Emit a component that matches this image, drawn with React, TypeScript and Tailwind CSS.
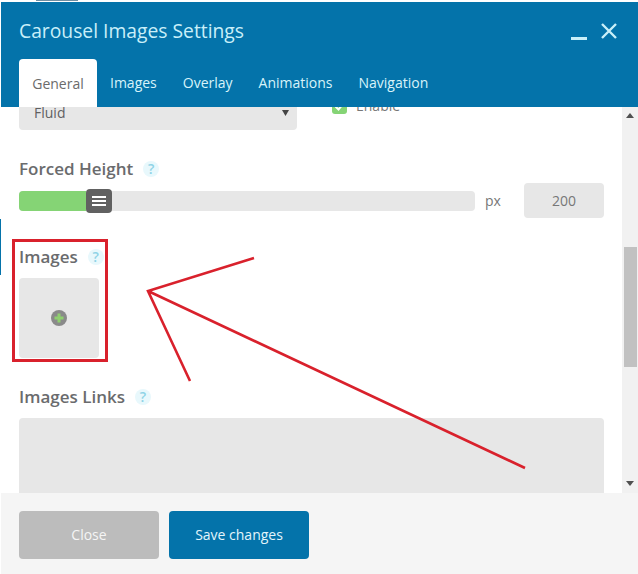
import { FC } from "react";

const font = { fontFamily: '"Open Sans", sans-serif' };

const Help: FC<{ className?: string }> = ({ className = "" }) => (
  <span
    className={`flex h-[16px] w-[16px] items-center justify-center rounded-full bg-[#e8f8fc] text-[14px] font-semibold text-[#8fd3e6] ${className}`}
  >
    ?
  </span>
);

const Label: FC<{ text: string; className?: string }> = ({ text, className = "" }) => (
  <div className={`flex h-[22px] items-center text-[17px] font-semibold leading-[22px] text-[#6a6b6d] ${className}`}>
    {text}
    <Help className="ml-[10px]" />
  </div>
);

const Scrollbar: FC = () => (
  <div className="flex w-[16px] shrink-0 flex-col items-center bg-[#f1f1f1]">
    <svg width="8" height="5" viewBox="0 0 8 5" className="mt-[6px] shrink-0">
      <path d="M4 0 8 5H0z" fill="#505050" />
    </svg>
    <div className="mt-[129px] h-[120px] w-[13px] shrink-0 bg-[#c1c1c1]" />
    <svg width="8" height="5" viewBox="0 0 8 5" className="mt-[114px] shrink-0">
      <path d="M0 0H8L4 5z" fill="#505050" />
    </svg>
  </div>
);

const App: FC = () => {
  return (
    <div className="relative h-[574px] w-[638px] overflow-hidden bg-white" style={font}>
      {/* Page behind the modal */}
      <div className="h-[2px] bg-white">
        <div className="ml-[36px] h-px w-[42px] bg-[#6f8ea3]" />
      </div>

      <div className="flex h-[572px] flex-col pl-px">
        {/* Header */}
        <div className="h-[105px] shrink-0 bg-[#0473aa] pl-[18px] pr-[21px]">
          <div className="flex h-[57px] items-center justify-between">
            <h4 className="text-[19.3px] leading-[28px] text-[#c9eff9]">Carousel Images Settings</h4>
            <div className="flex items-center gap-[14px]">
              <span className="mt-[16px] h-[2.5px] w-[16px] bg-[#c9eff9]" />
              <svg width="16" height="16" viewBox="0 0 16 16" fill="none">
                <path d="M1 1 15 15M15 1 1 15" stroke="#c9eff9" strokeWidth="2.4" />
              </svg>
            </div>
          </div>
          <div className="flex h-[48px] items-end text-[14px] text-[#d8f3fa]">
            <div className="flex h-[48px] w-[78px] items-center justify-center rounded-t-[4px] bg-white text-[#6b6b6b]">
              General
            </div>
            <span className="ml-[13px] h-[48px] leading-[48px]">Images</span>
            <span className="ml-[26px] h-[48px] leading-[48px]">Overlay</span>
            <span className="ml-[26px] h-[48px] leading-[48px]">Animations</span>
            <span className="ml-[26px] h-[48px] leading-[48px]">Navigation</span>
          </div>
        </div>

        {/* Scrolling body */}
        <div className="flex h-[386px] shrink-0">
          <div className="min-w-0 flex-1 overflow-hidden pl-[18px] pr-[17px]">
            <div className="-mt-[6px] flex items-start">
              <div className="flex h-[29px] w-[278px] items-center justify-between rounded-[4px] bg-[#e7e7e7] pb-[6px] pl-[15px] pr-[8px] text-[14px] leading-[14px] text-[#5f6062]">
                Fluid
                <svg width="7" height="6" viewBox="0 0 7 6">
                  <path d="M0 0H7L3.5 6z" fill="#444" />
                </svg>
              </div>
              <div className="-mt-[3px] ml-[35px] flex items-center gap-[9px] text-[14px] leading-[16px] text-[#777]">
                <span className="flex h-[15px] w-[15px] items-center justify-center rounded-[3px] bg-[#85d475]">
                  <svg width="11" height="9" viewBox="0 0 11 9">
                    <path d="M1.5 4.5 4.5 7.5 9.5 1.5" stroke="#fff" strokeWidth="2" fill="none" />
                  </svg>
                </span>
                Enable
              </div>
            </div>

            <Label text="Forced Height" className="mt-[28px]" />
            <div className="mt-[3px] flex items-center">
              <div className="flex h-[20px] w-[456px] items-center rounded-[4px] bg-[#e7e7e7]">
                <div className="h-full w-[67px] rounded-l-[4px] bg-[#85d475]" />
                <div className="flex h-[24px] w-[26px] flex-col items-center justify-center gap-[2px] rounded-[4px] bg-[#616161]">
                  <span className="h-[2px] w-[14px] bg-white" />
                  <span className="h-[2px] w-[14px] bg-white" />
                  <span className="h-[2px] w-[14px] bg-white" />
                </div>
              </div>
              <span className="ml-[10px] w-[39px] text-[14px] text-[#777]">px</span>
              <div className="flex h-[35px] w-[80px] items-center justify-center rounded-[4px] bg-[#e7e7e7] text-[14px] text-[#777]">
                200
              </div>
            </div>

            <Label text="Images" className="mt-[28px]" />
            <div className="mt-[10px] flex h-[80px] w-[80px] items-center justify-center rounded-[4px] bg-[#e7e7e7]">
              <svg width="16" height="16" viewBox="0 0 16 16">
                <circle cx="8" cy="8" r="8" fill="#8a8a8a" />
                <path d="M8 3.5v9M3.5 8h9" stroke="#8fd06f" strokeWidth="3" />
              </svg>
            </div>

            <Label text="Images Links" className="mt-[28px]" />
            <div className="mt-[10px] h-[120px] w-[585px] rounded-t-[4px] bg-[#e7e7e7]" />
          </div>
          <Scrollbar />
        </div>

        {/* Footer */}
        <div className="flex flex-1 items-start gap-[10px] bg-[#f5f5f5] pl-[18px] pt-[18px] text-[14px]">
          <button className="h-[48px] w-[140px] rounded-[4px] bg-[#bcbcbc] pb-[2px] font-medium text-[#f5f5f5]">Close</button>
          <button className="h-[48px] w-[140px] rounded-[4px] bg-[#0473aa] pb-[2px] text-[#e3f5fb]">Save changes</button>
        </div>
      </div>

      {/* Sliver of the page behind, on the left edge */}
      <div className="absolute left-0 top-[219px] h-[56px] w-px bg-[#0473aa]" />

      {/* Red annotation drawn over the screenshot */}
      <div className="absolute left-[12px] top-[239px] h-[123px] w-[96px] border-[3px] border-[#d9212c]" />
      <svg className="absolute left-0 top-0" width="638" height="574" viewBox="0 0 638 574" fill="none">
        <path d="M254 258 148 291 190 381M148 291 525 468" stroke="#d9212c" strokeWidth="2.6" />
      </svg>
    </div>
  );
};

export default App;
